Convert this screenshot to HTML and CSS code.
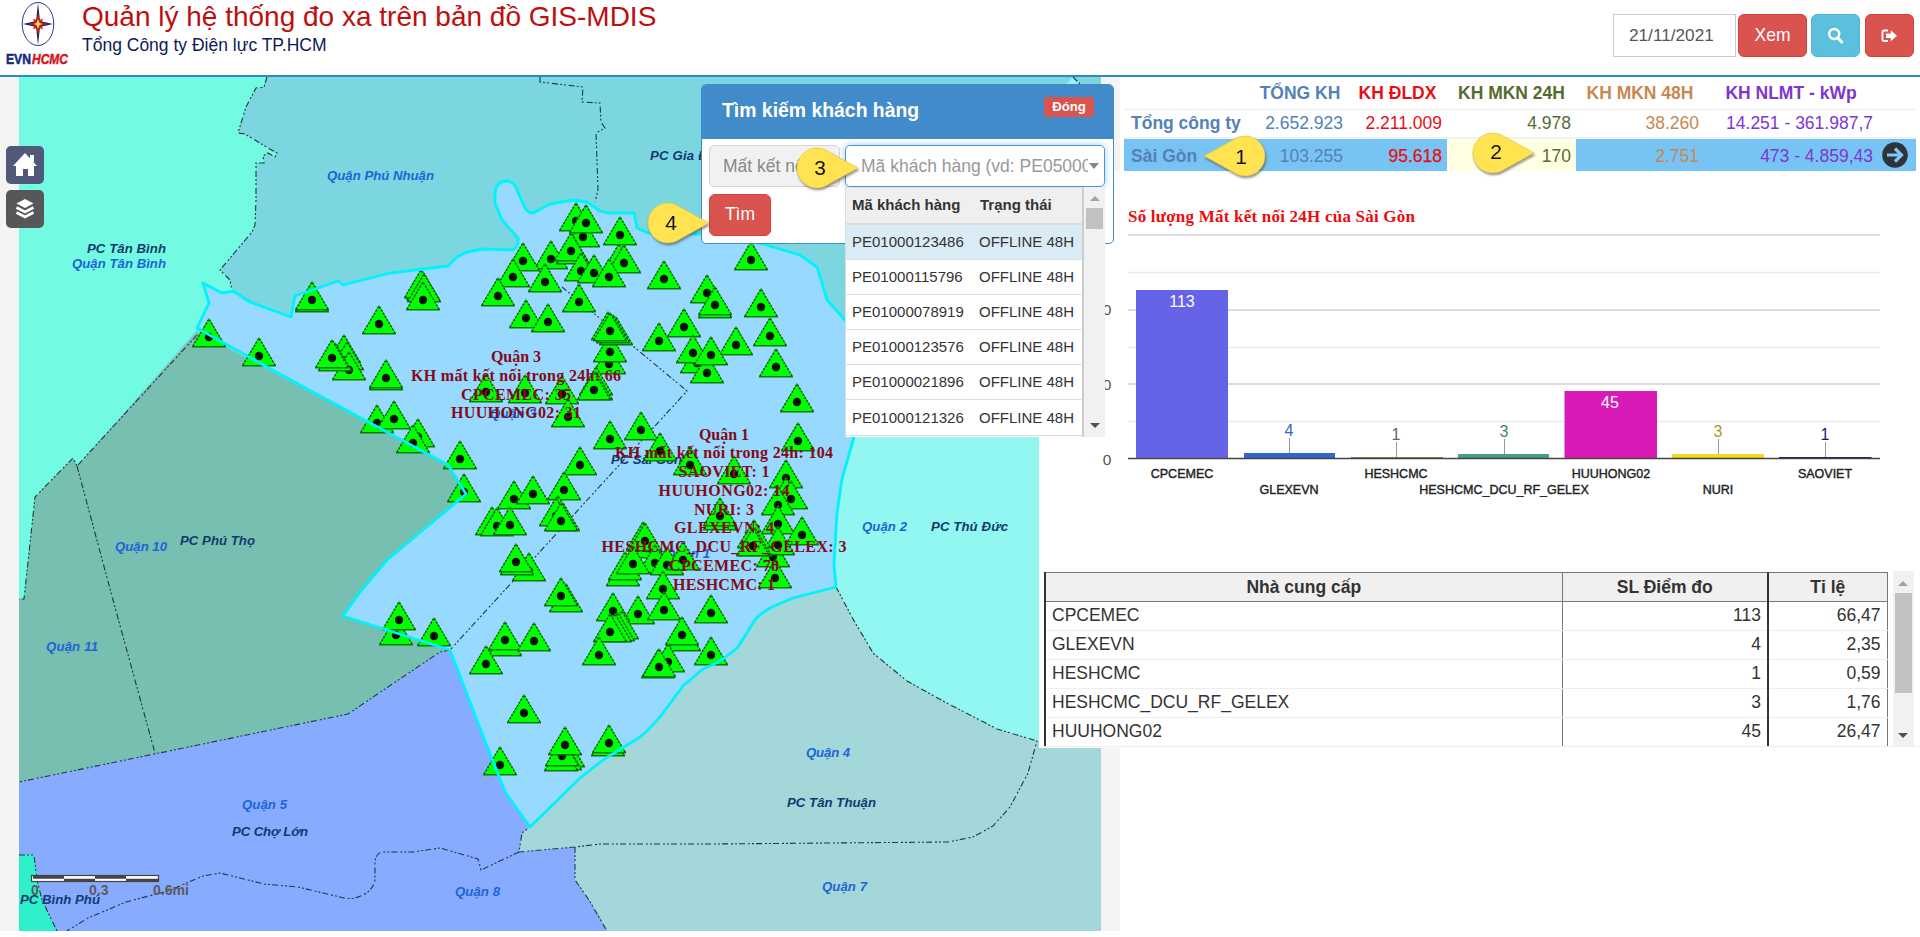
FILE: index.html
```html
<!DOCTYPE html>
<html lang="vi">
<head>
<meta charset="utf-8">
<title>Quản lý hệ thống đo xa trên bản đồ GIS-MDIS</title>
<link rel="stylesheet" href="styles.css">
</head>
<body>
<header class="header">
  <div class="logo">
    <svg class="logo-mark" viewBox="0 0 34 46">
      <ellipse cx="17" cy="22" rx="15.8" ry="21.5" fill="#fff" stroke="#2a3a8c" stroke-width="1"/>
      <path d="M17 1 L19 19 L32 22 L19 25 L17 43 L15 25 L2 22 L15 19Z" fill="#18246f"/>
      <path d="M17 11 L18.700 18 L22 16.500 L20.500 20.500 L27 22 L20.500 23.500 L22 27.500 L18.700 26 L17 33 L15.300 26 L12 27.500 L13.500 23.500 L7 22 L13.500 20.500 L12 16.500 L15.300 18Z" fill="#c3211c"/>
      <path d="M17 17 L18.300 20.700 L21 22 L18.300 23.300 L17 27 L15.700 23.300 L13 22 L15.700 20.700Z" fill="#ffe14a"/>
    </svg>
    <svg class="logo-name" viewBox="0 0 64 16"><text x="0" y="13" textLength="25" lengthAdjust="spacingAndGlyphs" fill="#132a7c" stroke="#132a7c">EVN</text><text x="26" y="13" textLength="36" lengthAdjust="spacingAndGlyphs" fill="#d3171c" stroke="#d3171c" font-style="italic">HCMC</text></svg>
  </div>
  <div class="titles">
    <h1 class="title">Quản lý hệ thống đo xa trên bản đồ GIS-MDIS</h1>
    <div class="subtitle">Tổng Công ty Điện lực TP.HCM</div>
  </div>
  <div class="tools">
    <div class="date">21/11/2021</div>
    <button class="btn btn-red btn-view">Xem</button>
    <button class="btn btn-cyan btn-icon"><svg width="17" height="17" viewBox="0 0 17 17"><circle cx="7.200" cy="7" r="5" fill="none" stroke="#fff" stroke-width="2.400"/><path d="M10.800 11 L14.700 15" stroke="#fff" stroke-width="3" stroke-linecap="round"/></svg></button>
    <button class="btn btn-red btn-icon"><svg width="17" height="16" viewBox="0 0 17 16"><path d="M7 2.500H2.800Q1.500 2.500 1.500 4V11.500Q1.500 13 2.800 13H7" fill="none" stroke="#fff" stroke-width="1.800"/><path d="M5 5.600H9.800V2.200L16 7.800L9.800 13.300V10H5Z" fill="#fff"/></svg></button>
  </div>
</header>

<main class="main">
  <section class="map">
    <svg class="map-canvas" width="1120" height="854" viewBox="0 77 1120 854">
      <defs>
        <g id="meter"><path d="M0 -18.500 L16.500 9.500 H-16.500Z" fill="#00ff00" stroke="#0a9d0a" stroke-width=".8"/><path d="M-16 9 L0 -18 L16 9" fill="none" stroke="#0b4d0b" stroke-width="1.500" stroke-dasharray="1.600 2"/><path d="M-17 9.800H17" stroke="#087a08" stroke-width="1.500"/><circle r="4.200" fill="#041004"/></g>
        <clipPath id="tiles"><rect x="19" y="77" width="1082" height="854"/></clipPath>
      </defs>
      <g clip-path="url(#tiles)">
        <rect x="19" y="77" width="1082" height="854" fill="#7cd6df"/>
        <path fill="#72fbe2" d="M0 77H267L264 87 256 88 246 107 238 133 245 134 268 148 277 153 275 157 268 153 263 156 264 163 256 163 256 200 255 225 252 232 220 270 230 280 232 291 222 293 203 283 209 303 197 330 77 466 73 458 35 497 24 599H0Z"/>
        <path fill="#77bfb0" d="M19 599H24L35 497 73 458 77 466 197 332 448 465 466 494 343 616 450 650 440 652 348 714 19 782Z"/>
        <path fill="#87abff" d="M19 782L348 714 440 652 450 650 478 723 505 792 530 827 522 833 519 852 575 847 575 880 589 900 600 917 607 931H19Z"/>
        <path fill="#30f0cc" d="M19 855L34 854 37 880 42 900 57 931H19Z"/>
        <path fill="#92f7f0" d="M1073 77L1080 84 1101 120V741H1037L997 729 943 701 907 681 873 653 853 619 836 587 834 564 837 513 842 479 854 437 870 380 845 320Z"/>
        <path fill="#a3d7da" d="M836 587L853 619 873 653 907 681 943 701 997 729 1037 741H1101V931H607L600 917 589 900 575 880 575 847 519 852 522 833 530 827 580 778 603 760 640 737 663 713 683 686 703 669 738 647 753 623 772 607 793 598Z"/>
        <path id="core" fill="#97d9ff" d="M203 283L222 293 233 291 250 302 291 317 295 296 338 281 343 285 390 273 448 266 457 257 467 252 483 249 513 250Q519 246 518 238L502 220 495 203 495 193Q496 181 507 181 515 182 517 190L525 208Q530 216 537 211L550 204 573 200 587 202 600 211 607 213 634 213 637 228 648 233 700 234 763 244 800 255 817 267 822 283 827 300 845 320 870 380 854 437 842 479 837 513 834 564 836 587 793 598 772 607Q757 615 753 623L738 647Q722 662 703 669L683 686 663 713Q652 727 640 737L603 760 580 778 530 827 505 792 478 723 450 650 343 616 360 592 387 560 423 530 466 494 448 465 333 403 267 367 197 328 209 303Z"/>
        <g class="borders">
          <path d="M267 77L264 87 256 88 246 107 238 133 245 134 268 148 277 153 275 157 268 153 263 156 264 163 256 163 256 200 255 225 252 232 220 270 230 280 232 291M197 335L77 466 73 458 35 497 24 599H19M77 466L113 600 155 753M450 650L440 652 348 714 19 782"/>
          <path d="M540 77V82L583 87 582 102 600 103 601 122 605 128 596 133 598 190 595 202M562 287L687 391 450 650"/>
          <path d="M836 587L853 619 873 653 907 681 943 701 997 729 1037 741 1028 773 1010 807 993 826 973 837 948 842 713 844 600 844 575 847 519 852 522 833 530 827"/>
          <path d="M519 852L481 870 478 859 440 848 413 852 381 852Q375 855 375 863V880Q373 890 363 895 353 900 344 898L298 887 264 884 220 873 203 876 168 891 126 902 88 918 67 931M575 847V880L589 900 607 931M19 855H34L37 880 42 900 57 931M1073 77L1080 84"/>
        </g>
        <g class="place district">
          <text x="72" y="268" textLength="94">Quận Tân Bình</text>
          <text x="327" y="180" textLength="107">Quận Phú Nhuận</text>
          <text x="115" y="551" textLength="52">Quận 10</text>
          <text x="46" y="651" textLength="52">Quận 11</text>
          <text x="242" y="809" textLength="45">Quận 5</text>
          <text x="455" y="896" textLength="45">Quận 8</text>
          <text x="806" y="757" textLength="44">Quận 4</text>
          <text x="822" y="891" textLength="45">Quận 7</text>
          <text x="862" y="531" textLength="45">Quận 2</text>
          <text x="665" y="558" textLength="45">Quận 1</text>
          <text x="490" y="418" textLength="46">Quận 3</text>
        </g>
        <g class="place company">
          <text x="87" y="253" textLength="79">PC Tân Bình</text>
          <text x="650" y="160" textLength="78">PC Gia Định</text>
          <text x="180" y="545" textLength="75">PC Phú Thọ</text>
          <text x="232" y="836" textLength="76">PC Chợ Lớn</text>
          <text x="20" y="904" textLength="80">PC Bình Phú</text>
          <text x="787" y="807" textLength="89">PC Tân Thuận</text>
          <text x="931" y="531" textLength="77">PC Thủ Đức</text>
          <text x="611" y="464" textLength="71">PC Sài Gòn</text>
        </g>
        <g id="meters"></g>
        <use href="#core" class="outline"/>
      </g>
      <g class="stats">
        <text x="516" y="362">Quận 3</text>
        <text x="516" y="381" textLength="210">KH mất kết nối trong 24h: 66</text>
        <text x="516" y="400" textLength="110">CPCEMEC: 35</text>
        <text x="516" y="418" textLength="130">HUUHONG02: 31</text>
        <text x="724" y="440">Quận 1</text>
        <text x="724" y="458" textLength="218">KH mất kết nối trong 24h: 104</text>
        <text x="724" y="477" textLength="91">SAOVIET: 1</text>
        <text x="724" y="496" textLength="131">HUUHONG02: 14</text>
        <text x="724" y="515" textLength="60">NURI: 3</text>
        <text x="724" y="533" textLength="100">GLEXEVN: 4</text>
        <text x="724" y="552" textLength="245">HESHCMC_DCU_RF_GELEX: 3</text>
        <text x="724" y="571" textLength="110">CPCEMEC: 78</text>
        <text x="724" y="590" textLength="102">HESHCMC: 1</text>
      </g>
      <g>
        <rect x="31.500" y="875.500" width="127" height="6" fill="#fff" stroke="#444" stroke-width="1.200"/>
        <path d="M33 877.200H64M95 877.200H126M64 880.200H95M126 880.200H158" stroke="#444" stroke-width="3"/>
        <text class="scale" x="31" y="895">0</text><text class="scale" x="89" y="895">0.3</text><text class="scale" x="153" y="895">0.6mi</text>
      </g>
    </svg>
    <div class="map-tools">
      <div class="map-btn home"><svg width="26" height="26" viewBox="0 0 26 26"><path d="M13 1L25 14H22V24H16V17H11V24H4V14H1Z" fill="#fff"/><path d="M18 3H22V11L18 7Z" fill="#fff"/></svg></div>
      <div class="map-btn layers"><svg width="20" height="22" viewBox="0 0 20 22"><path d="M10 1L18.500 5.500 10 10 1.500 5.500Z" fill="#fff"/><path d="M1.500 9.500L10 14 18.500 9.500M1.500 14.500L10 19 18.500 14.500" fill="none" stroke="#fff" stroke-width="2.600"/></svg></div>
    </div>
  </section>

  <section class="side">
    <table class="summary">
      <colgroup><col class="c1"><col class="c2"><col class="c3"><col class="c4"><col class="c5"><col class="c6"><col class="c7"></colgroup>
      <thead><tr><th></th><th class="blue">TỔNG KH</th><th class="red">KH ĐLDX</th><th class="olive">KH MKN 24H</th><th class="tan">KH MKN 48H</th><th class="violet">KH NLMT - kWp</th><th></th></tr></thead>
      <tbody>
        <tr><td class="name blue">Tổng công ty</td><td class="blue">2.652.923</td><td class="red">2.211.009</td><td class="olive">4.978</td><td class="tan">38.260</td><td class="violet">14.251 - 361.987,7</td><td></td></tr>
        <tr class="active"><td class="name blue">Sài Gòn</td><td class="blue">103.255</td><td class="red strong">95.618</td><td class="olive picked">170</td><td class="tan">2.751</td><td class="violet">473 - 4.859,43</td><td class="go"><svg width="26" height="26" viewBox="0 0 26 26"><circle cx="13" cy="13" r="12.800" fill="#2d3338"/><path d="M5 13H19M13 6.500L19.500 13L13 19.500" fill="none" stroke="#7fc8f5" stroke-width="3.200"/></svg></td></tr>
      </tbody>
    </table>
    <div class="details">
      <svg class="chart" width="881" height="400" viewBox="1039 171 881 400">
        <text class="chart-title" x="1128" y="222" textLength="287">Số lượng Mất kết nối 24H của Sài Gòn</text>
        <path class="grid" d="M1128 235H1880M1128 310H1880M1128 384H1880"/>
        <path class="grid minor" d="M1128 272.500H1880M1128 347.500H1880M1128 421.500H1880"/>
        <rect x="1136" y="290" width="92" height="168" fill="#6563e8"/>
        <rect x="1244" y="453" width="91" height="5" fill="#3366cc"/>
        <rect x="1351" y="457" width="92" height="1.500" fill="#8a8250"/>
        <rect x="1458" y="454" width="91" height="4" fill="#43a080"/>
        <rect x="1564.500" y="391" width="92.500" height="67" fill="#d81bb6"/>
        <rect x="1672" y="454" width="92" height="4" fill="#f5d822"/>
        <rect x="1779" y="457" width="92.500" height="1.500" fill="#2a0a8a"/>
        <path d="M1128 458.500H1880" stroke="#444" stroke-width="1.400"/>
        <path class="stems" d="M1289.500 438V453M1396.500 442V457M1504.500 439V454M1718.500 439V454M1825.500 442V457"/>
        <g class="values">
          <text x="1182" y="307" fill="#fff">113</text><text x="1289" y="436" fill="#3366cc">4</text><text x="1396" y="440" fill="#666">1</text><text x="1504" y="437" fill="#3a8a70">3</text><text x="1610" y="408" fill="#fff">45</text><text x="1718" y="437" fill="#ab9a2b">3</text><text x="1825" y="440" fill="#2c1270">1</text>
        </g>
        <g class="ticks"><text x="1107" y="315">0</text><text x="1107" y="390">0</text><text x="1107" y="465">0</text></g>
        <g class="cats">
          <text x="1182" y="478">CPCEMEC</text><text x="1289" y="494">GLEXEVN</text><text x="1396" y="478">HESHCMC</text><text x="1504" y="494">HESHCMC_DCU_RF_GELEX</text><text x="1611" y="478">HUUHONG02</text><text x="1718" y="494">NURI</text><text x="1825" y="478">SAOVIET</text>
        </g>
      </svg>
      <div class="vendors">
        <table class="vendor-table">
          <colgroup><col class="v1"><col class="v2"><col class="v3"></colgroup>
          <thead><tr><th>Nhà cung cấp</th><th>SL Điểm đo</th><th>Tỉ lệ</th></tr></thead>
          <tbody>
            <tr><td>CPCEMEC</td><td>113</td><td>66,47</td></tr>
            <tr><td>GLEXEVN</td><td>4</td><td>2,35</td></tr>
            <tr><td>HESHCMC</td><td>1</td><td>0,59</td></tr>
            <tr><td>HESHCMC_DCU_RF_GELEX</td><td>3</td><td>1,76</td></tr>
            <tr><td>HUUHONG02</td><td>45</td><td>26,47</td></tr>
          </tbody>
        </table>
        <div class="scrollbar"><i class="arrow up"></i><i class="thumb"></i><i class="arrow down"></i></div>
      </div>
    </div>
  </section>
</main>

<div class="search">
  <div class="search-head"><span>Tìm kiếm khách hàng</span><span class="close">Đóng</span></div>
  <div class="search-body">
    <div class="fields">
      <div class="field state">Mất kết nối</div>
      <div class="field customer"><span class="hint">Mã khách hàng (vd: PE05000123)</span><i class="arrow down grey"></i></div>
    </div>
    <button class="btn btn-red btn-find">Tìm</button>
  </div>
  <div class="dropdown">
    <div class="options">
      <div class="option option-head"><span>Mã khách hàng</span><span>Trạng thái</span></div>
      <div class="option selected"><span>PE01000123486</span><span>OFFLINE 48H</span></div>
      <div class="option"><span>PE01000115796</span><span>OFFLINE 48H</span></div>
      <div class="option"><span>PE01000078919</span><span>OFFLINE 48H</span></div>
      <div class="option"><span>PE01000123576</span><span>OFFLINE 48H</span></div>
      <div class="option"><span>PE01000021896</span><span>OFFLINE 48H</span></div>
      <div class="option"><span>PE01000121326</span><span>OFFLINE 48H</span></div>
    </div>
    <div class="scrollbar"><i class="arrow up"></i><i class="thumb"></i><i class="arrow down"></i></div>
  </div>
</div>

<svg class="pin pin-1" width="70" height="48" viewBox="-24 -24 70 48"><path transform="rotate(180)" class="drop" d="M41 0L12 -16A20 20 0 1 0 12 16Z"/><text x="-4" y="8">1</text></svg>
<svg class="pin pin-2" width="70" height="48" viewBox="-24 -24 70 48"><path class="drop" d="M41 0L12 -16A20 20 0 1 0 12 16Z"/><text x="3" y="6">2</text></svg>
<svg class="pin pin-3" width="70" height="48" viewBox="-24 -24 70 48"><path class="drop" d="M41 0L12 -16A20 20 0 1 0 12 16Z"/><text x="3" y="7">3</text></svg>
<svg class="pin pin-4" width="70" height="48" viewBox="-24 -24 70 48"><path class="drop" d="M41 0L12 -16A20 20 0 1 0 12 16Z"/><text x="3" y="7">4</text></svg>
<script src="script.js"></script>
</body>
</html>
```

FILE: styles.css
```css
* { box-sizing: border-box; }
body { margin: 0; width: 1920px; height: 937px; overflow: hidden; position: relative; background: #fff; font-family: "Liberation Sans", Arial, sans-serif; font-size: 17.5px; color: #333; }
.header { height: 77px; border-bottom: 2px solid #2a8aca; display: flex; align-items: flex-start; padding: 0 6px; }
.logo { width: 64px; padding-top: 2px; display: flex; flex-direction: column; align-items: center; }
.logo-mark { width: 34px; height: 46px; }
.logo-name { width: 64px; height: 16px; margin-top: 3px; font-size: 14.5px; font-weight: bold; overflow: visible; }
.logo-name text { stroke-width: .5px; }
.titles { margin-left: 12px; flex: 1; }
.title { margin: 2px 0 0; font-size: 28px; line-height: 30px; font-weight: normal; color: #c00d0d; white-space: nowrap; }
.subtitle { margin-top: 2px; font-size: 17.5px; line-height: 22px; color: #0d1b57; }
.tools { display: flex; padding-top: 14px; }
.date { width: 123px; height: 43px; border: 1px solid #ccc; margin-right: 2px; padding-left: 15px; line-height: 41px; font-size: 17.2px; color: #555; }
.btn { height: 43px; border-radius: 6px; border: 1px solid #d43f3a; color: #fff; font: 17.5px "Liberation Sans", Arial, sans-serif; padding: 0; display: flex; align-items: center; justify-content: center; }
.btn-red { background: #d9534f; }
.btn-cyan { background: #5bc0de; border-color: #46b8da; }
.btn-view { width: 69px; margin-right: 4px; }
.btn-icon { width: 49px; }
.btn-icon + .btn-icon { margin-left: 5px; }
.main { display: flex; }
.map { width: 1120px; height: 854px; background: #f4f4f4; position: relative; flex: none; }
.map-canvas { display: block; }
.borders path { fill: none; stroke: #21383c; stroke-width: 1.1; stroke-dasharray: 6 2 2 2 2 3; }
.outline { fill-opacity: 0; stroke: #00f2fa; stroke-width: 2.8; stroke-linejoin: round; }
.place { font: italic bold 13.2px "Liberation Sans", Arial, sans-serif; }
.district { fill: #2163d8; }
.company { fill: #123a6e; }
.stats { font: bold 16px "Liberation Serif", "Times New Roman", serif; fill: #860a18; text-anchor: middle; }
.scale { font: bold 14px "Liberation Sans", Arial, sans-serif; fill: #5b5b60; }
.map-tools { position: absolute; left: 6px; top: 69px; display: flex; flex-direction: column; gap: 6px; }
.map-btn { width: 38px; height: 38px; border-radius: 5px; display: flex; align-items: center; justify-content: center; }
.home { background: #50597a; }
.layers { background: #555759; }
.side { width: 800px; padding-left: 4px; padding-top: 1px; flex: none; }
.summary { width: 792px; border-collapse: collapse; table-layout: fixed; }
.summary th, .summary td { padding: 0 5px; white-space: nowrap; }
.summary th { height: 31px; padding-top: 1px; text-align: center; border-bottom: 1px solid #eee; }
.summary td { height: 29px; text-align: right; border-bottom: 2px solid #f1f1f1; line-height: 20px; }
.summary tr.active td { height: 33px; padding-top: 1px; background: #77c3f3; border: 0; }
.summary td.name { padding-left: 7px; text-align: left; font-weight: bold; }
.summary tr.active td.picked { background: #ffffe3; }
.summary tr.active td.go { padding: 0 4px; text-align: left; }
.go svg { display: block; }
.strong { -webkit-text-stroke: .25px; }
.c1 { width: 128px; } .c2 { width: 96px; } .c3 { width: 99px; } .c4 { width: 129px; } .c5 { width: 128px; } .c6 { width: 174px; } .c7 { width: 38px; }
.blue { color: #5580b8; } .red { color: #e80d15; } .olive { color: #556b2f; } .tan { color: #c98750; } .violet { color: #8035cf; }
.details { margin-left: -85px; width: 881px; height: 577px; background: #fff; position: relative; }
.chart { display: block; }
.chart-title { font: bold 17px "Liberation Serif", "Times New Roman", serif; fill: #ec0c0c; }
.grid { stroke: #d4d4d4; stroke-width: 1.300; }
.minor { stroke: #e9e9e9; }
.stems { stroke: #999; }
.values { font-size: 16px; text-anchor: middle; }
.ticks { font-size: 15.5px; text-anchor: middle; fill: #555; }
.cats { font-size: 12.500px; text-anchor: middle; fill: #222; stroke: #222; stroke-width: .4px; }
.vendors { display: flex; padding-left: 5px; height: 176px; border-bottom: 1px solid #eee; overflow: hidden; }
.vendor-table { width: 842px; height: 174px; margin-top: 1px; border-collapse: collapse; table-layout: fixed; margin-right: 5px; }
.v1 { width: 517px; } .v2 { width: 206px; } .v3 { width: 119px; }
.vendor-table th { height: 29px; padding: 0; background: #f0f0f0; border: 1px solid #777; }
.vendor-table td { height: 29px; padding: 0 6px 3px; text-align: right; border: 1px solid #777; border-top-color: #eee; border-bottom-color: #eee; line-height: 20px; }
.vendor-table tbody tr:first-child td { border-top-color: #777; }
.vendor-table td:first-child { text-align: left; }
.vendor-table tr > :first-child { border-left: 2px solid #333; }
.vendor-table tr > :last-child { border-left: 2px solid #333; }
.scrollbar { background: #f1f1f1; display: flex; flex-direction: column; align-items: center; justify-content: space-between; position: relative; }
.vendors .scrollbar { width: 21px; height: 175px; padding: 10px 0 8px; }
.thumb { background: #c1c1c1; flex: none; }
.vendors .thumb { width: 17px; height: 100px; margin: 7px 0 auto; }
.arrow { width: 0; height: 0; border: 5px solid transparent; flex: none; }
.up { border-top: 0; border-bottom-color: #a3a3a3; }
.down { border-bottom: 0; border-top-color: #505050; }
.grey { border-top-color: #888; border-top-width: 6px; }
.search { position: absolute; left: 701px; top: 84px; width: 413px; height: 160px; background: #fff; border: 1px solid #428bca; border-radius: 5px; z-index: 5; }
.search-head { height: 54px; background: #428bca; border-radius: 4px 4px 0 0; color: #fff; font-weight: bold; font-size: 19.400px; line-height: 51px; padding: 0 19px 0 20px; display: flex; justify-content: space-between; }
.close { width: 50px; height: 20px; margin-top: 12px; background: #d9534f; border-radius: 3px; font-size: 13.200px; line-height: 19px; text-align: center; }
.search-body { padding: 6px 8px 0 7px; }
.fields { display: flex; gap: 5px; margin-bottom: 7px; }
.field { height: 42px; border: 1px solid #d5d5d5; border-radius: 5px; color: #888; line-height: 40px; }
.state { width: 131px; background: #f1f1f1; padding-left: 13px; }
.customer { width: 260px; border-color: #4a98e0; padding: 0 5px 0 15px; box-shadow: 0 0 7px #9ccbee; background: #fff; display: flex; align-items: center; color: #999; }
.hint { width: 227px; overflow: hidden; white-space: nowrap; margin-right: 1px; }
.btn-find { width: 62px; height: 42px; padding-bottom: 1px; }
.dropdown { position: absolute; left: 143px; top: 102px; width: 260px; height: 250px; background: #fff; display: flex; font-size: 15px; }
.options { width: 239px; border: 1px solid #ddd; border-right: 2px solid #ccc; border-bottom: 0; }
.option { height: 35.200px; padding-bottom: 1px; display: flex; align-items: center; border-bottom: 1px solid #ddd; }
.option span { padding-left: 6px; width: 127px; }
.option span + span { width: auto; }
.option-head { background: #efefef; font-weight: bold; height: 36.500px; border-bottom: 2px solid #ddd; }
.option-head span + span { padding-left: 7px; }
.selected { background: #d9ecf6; }
.dropdown .scrollbar { width: 21px; padding: 9px 0; }
.dropdown .thumb { width: 17px; height: 21px; margin: 7px 0 auto; }
.pin { position: absolute; z-index: 9; overflow: visible; filter: drop-shadow(1px 2px 1px rgba(60, 60, 60, .55)); }
.drop { fill: #ffe351; stroke: #e2c23c; stroke-width: .6; stroke-linejoin: round; }
.pin text { font-size: 21px; fill: #111; text-anchor: middle; }
.pin-1 { left: 1221px; top: 132px; }
.pin-2 { left: 1469px; top: 129px; }
.pin-3 { left: 793px; top: 144px; }
.pin-4 { left: 644px; top: 199px; }
```

FILE: script.js
```js
// Meter positions on the map, listed from back to front.
const meters = [
  [576,221],[583,237],[586,223],[551,259],[573,254],[571,251],[523,261],[513,277],[581,271],[594,273],
  [620,235],[619,262],[624,263],[609,277],[545,282],[664,279],[498,296],[579,302],[751,260],[707,293],
  [715,308],[715,305],[761,307],[526,318],[548,322],[609,364],[610,352],[616,335],[613,333],[608,330],
  [610,331],[684,327],[659,341],[770,336],[736,345],[697,363],[693,353],[707,373],[711,355],[776,367],
  [596,385],[596,390],[594,390],[486,392],[525,393],[562,394],[568,417],[797,402],[641,430],[610,439],
  [660,451],[690,465],[734,474],[798,441],[460,459],[464,492],[580,465],[564,490],[514,499],[533,494],
  [785,498],[786,478],[786,496],[791,499],[778,505],[778,524],[802,535],[773,557],[778,545],[754,538],
  [755,546],[753,546],[775,578],[720,520],[720,516],[643,540],[648,548],[645,541],[655,563],[623,576],
  [625,570],[633,564],[667,565],[683,560],[663,589],[638,614],[664,610],[613,611],[711,613],[622,629],
  [618,631],[615,632],[610,632],[684,641],[682,635],[599,655],[668,662],[658,668],[659,667],[711,655],
  [492,525],[497,526],[510,525],[558,514],[556,516],[563,521],[561,521],[529,571],[517,565],[516,562],
  [566,602],[561,596],[505,646],[505,640],[534,641],[486,664],[524,713],[396,635],[399,620],[434,636],
  [500,765],[568,757],[565,760],[561,761],[562,756],[565,745],[608,746],[609,743],[209,337],[259,356],
  [312,302],[312,300],[379,324],[423,290],[421,288],[424,292],[423,300],[344,353],[347,360],[349,370],
  [335,361],[332,358],[386,380],[386,378],[377,423],[394,419],[418,437],[413,443]
];
const layer = document.getElementById("meters");
for (const [x, y] of meters) {
  const mark = document.createElementNS("http://www.w3.org/2000/svg", "use");
  mark.setAttribute("href", "#meter");
  mark.setAttribute("x", x);
  mark.setAttribute("y", y);
  layer.appendChild(mark);
}
```
